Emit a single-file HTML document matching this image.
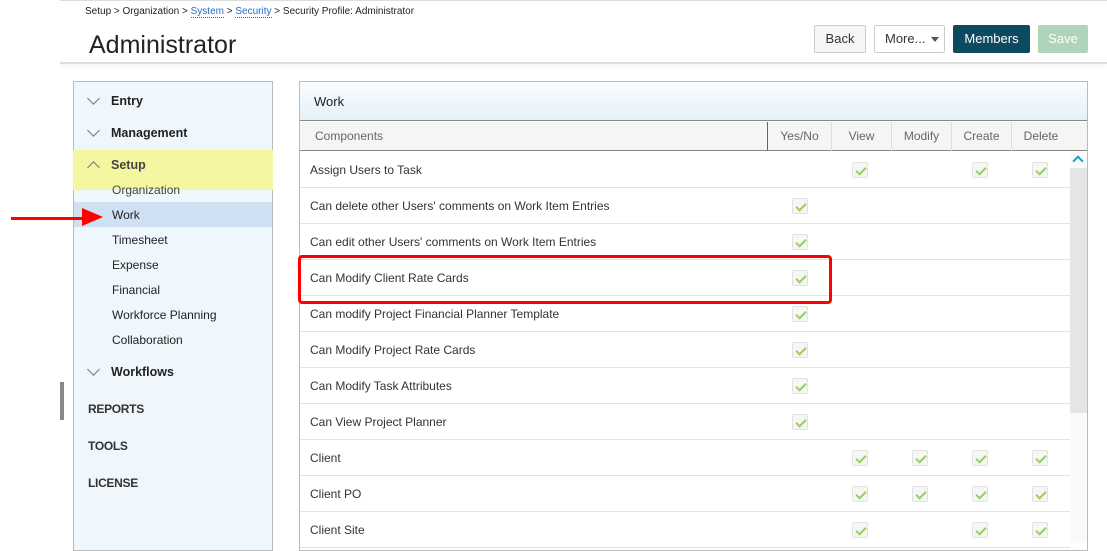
<!DOCTYPE html>
<html><head><style>
*{margin:0;padding:0;box-sizing:border-box}
body{width:1107px;height:543px;overflow:hidden;background:#fff;font-family:"Liberation Sans",sans-serif;color:#333;position:relative}
.a{position:absolute}
.btn{position:absolute;top:25px;height:28px;border:1px solid #ccc;border-radius:2px;font-size:13px;line-height:26px;text-align:center;background:#f5f5f5;color:#333}
.nav{font-size:13px;color:#222}
.cb{position:absolute;width:16px;height:16px;background:#f6f6f6;border:1px solid #e2e2e2;border-radius:2px}
.cb:after{content:"";position:absolute;left:5px;top:2px;width:4px;height:8px;border:solid #9c6;border-width:0 2px 2px 0;transform:rotate(45deg)}
.row{position:absolute;left:300px;width:770px;height:36px;border-bottom:1px solid #e3e3e3;font-size:12px;line-height:36px;padding-left:10px;color:#333}
.ch{position:absolute;top:122px;height:29px;line-height:29px;font-size:12px;color:#666;text-align:center;border-left:1px solid #ddd}
.chev{position:absolute;width:9px;height:9px;border:solid #777;border-width:0 1px 1px 0;transform:rotate(45deg)}
</style></head><body>
<div class="a" style="left:60px;top:0;width:1047px;height:1px;background:#ddd"></div>
<div class="a" style="left:85px;top:6px;font-size:10px;color:#222">Setup &gt; Organization &gt; <span style="color:#2a6cc0;border-bottom:1px dotted #2a6cc0">System</span> &gt; <span style="color:#2a6cc0;border-bottom:1px dotted #2a6cc0">Security</span> &gt; Security Profile: Administrator</div>
<div class="a" style="left:89px;top:31px;font-size:25px;color:#222">Administrator</div>
<div class="a" style="left:60px;top:62px;width:1047px;height:2px;background:#ddd;box-shadow:0 2px 3px #eee"></div>
<div class="btn" style="left:814px;width:52px">Back</div>
<div class="btn" style="left:874px;width:71px;background:#fff;text-align:left;padding-left:10px">More... <span style="position:absolute;right:5px;top:11px;border:4px solid transparent;border-top:5px solid #555"></span></div>
<div class="btn" style="left:953px;width:77px;background:#0e4a5f;border-color:#0e4a5f;color:#fff">Members</div>
<div class="btn" style="left:1038px;width:50px;background:#b0d4b8;border-color:#b0d4b8;color:#fff">Save</div>

<div class="a" style="left:73px;top:81px;width:200px;height:470px;background:#f0f7fc;border:1px solid #bbb"></div>
<div class="a" style="left:73px;top:150px;width:200px;height:40px;background:#f5f7a0"></div>
<div class="a" style="left:74px;top:202px;width:198px;height:25px;background:#cfe0f3"></div>
<div class="chev" style="left:89px;top:94px"></div><div class="a nav" style="left:111px;top:94px;font-weight:bold;font-size:12.5px">Entry</div>
<div class="chev" style="left:89px;top:126px"></div><div class="a nav" style="left:111px;top:126px;font-weight:bold;font-size:12.5px">Management</div>
<div class="chev" style="left:89px;top:163px;transform:rotate(225deg)"></div><div class="a nav" style="left:111px;top:158px;font-weight:bold;font-size:12.5px;color:#444">Setup</div>
<div class="a nav" style="left:112px;top:183px;font-size:12px;color:#444">Organization</div>
<div class="a nav" style="left:112px;top:208px;font-size:12px">Work</div>
<div class="a nav" style="left:112px;top:233px;font-size:12px">Timesheet</div>
<div class="a nav" style="left:112px;top:258px;font-size:12px">Expense</div>
<div class="a nav" style="left:112px;top:283px;font-size:12px">Financial</div>
<div class="a nav" style="left:112px;top:308px;font-size:12px">Workforce Planning</div>
<div class="a nav" style="left:112px;top:333px;font-size:12px">Collaboration</div>
<div class="chev" style="left:89px;top:365px"></div><div class="a nav" style="left:111px;top:365px;font-weight:bold;font-size:12.5px">Workflows</div>
<div class="a nav" style="left:88px;top:402px;font-size:12px;font-weight:bold;color:#333;letter-spacing:-0.3px">REPORTS</div>
<div class="a nav" style="left:88px;top:439px;font-size:12px;font-weight:bold;color:#333;letter-spacing:-0.3px">TOOLS</div>
<div class="a nav" style="left:88px;top:476px;font-size:12px;font-weight:bold;color:#333;letter-spacing:-0.3px">LICENSE</div>
<div class="a" style="left:60px;top:382px;width:4px;height:38px;background:#888"></div>
<div class="a" style="left:11px;top:217px;width:74px;height:3px;background:#f00"></div>
<div class="a" style="left:82px;top:208px;border-top:9px solid transparent;border-bottom:9px solid transparent;border-left:21px solid #f00"></div>

<div class="a" style="left:299px;top:81px;width:789px;height:470px;border:1px solid #bbb"></div>
<div class="a" style="left:300px;top:82px;width:787px;height:39px;background:linear-gradient(#fafcfe,#e4f1fa);border-bottom:1px solid #888;font-size:13px;line-height:39px;padding-left:14px;color:#222">Work</div>
<div class="a" style="left:300px;top:122px;width:787px;height:29px;background:#f5f5f5;border-bottom:1px solid #888"></div>
<div class="a" style="left:315px;top:122px;line-height:29px;font-size:12px;color:#666">Components</div>
<div class="a" style="left:767px;top:122px;width:1px;height:29px;background:#666"></div>
<div class="ch" style="left:768px;width:63px;border:0">Yes/No</div>
<div class="ch" style="left:831px;width:60px">View</div>
<div class="ch" style="left:891px;width:60px">Modify</div>
<div class="ch" style="left:951px;width:60px">Create</div>
<div class="ch" style="left:1011px;width:59px">Delete</div>
<div class="a" style="left:1070px;top:152px;width:17px;height:391px;background:#fafafa"></div>
<div class="a" style="left:1070px;top:168px;width:17px;height:245px;background:#e5e5e5"></div>
<div class="a" style="left:1074px;top:157px;width:8px;height:8px;border:solid #1a9fd0;border-width:2px 0 0 2px;transform:rotate(45deg)"></div>

<div class="row" style="top:152px">Assign Users to Task</div>
<div class="row" style="top:188px">Can delete other Users' comments on Work Item Entries</div>
<div class="row" style="top:224px">Can edit other Users' comments on Work Item Entries</div>
<div class="row" style="top:260px">Can Modify Client Rate Cards</div>
<div class="row" style="top:296px">Can modify Project Financial Planner Template</div>
<div class="row" style="top:332px">Can Modify Project Rate Cards</div>
<div class="row" style="top:368px">Can Modify Task Attributes</div>
<div class="row" style="top:404px">Can View Project Planner</div>
<div class="row" style="top:440px">Client</div>
<div class="row" style="top:476px">Client PO</div>
<div class="row" style="top:512px">Client Site</div>

<div class="cb" style="left:852px;top:162px"></div><div class="cb" style="left:972px;top:162px"></div><div class="cb" style="left:1032px;top:162px"></div>
<div class="cb" style="left:792px;top:198px"></div>
<div class="cb" style="left:792px;top:234px"></div>
<div class="cb" style="left:792px;top:270px"></div>
<div class="cb" style="left:792px;top:306px"></div>
<div class="cb" style="left:792px;top:342px"></div>
<div class="cb" style="left:792px;top:378px"></div>
<div class="cb" style="left:792px;top:414px"></div>
<div class="cb" style="left:852px;top:450px"></div><div class="cb" style="left:912px;top:450px"></div><div class="cb" style="left:972px;top:450px"></div><div class="cb" style="left:1032px;top:450px"></div>
<div class="cb" style="left:852px;top:486px"></div><div class="cb" style="left:912px;top:486px"></div><div class="cb" style="left:972px;top:486px"></div><div class="cb" style="left:1032px;top:486px"></div>
<div class="cb" style="left:852px;top:522px"></div><div class="cb" style="left:972px;top:522px"></div><div class="cb" style="left:1032px;top:522px"></div>

<div class="a" style="left:298px;top:255px;width:534px;height:49px;border:3px solid #f00;border-radius:4px"></div>
</body></html>
